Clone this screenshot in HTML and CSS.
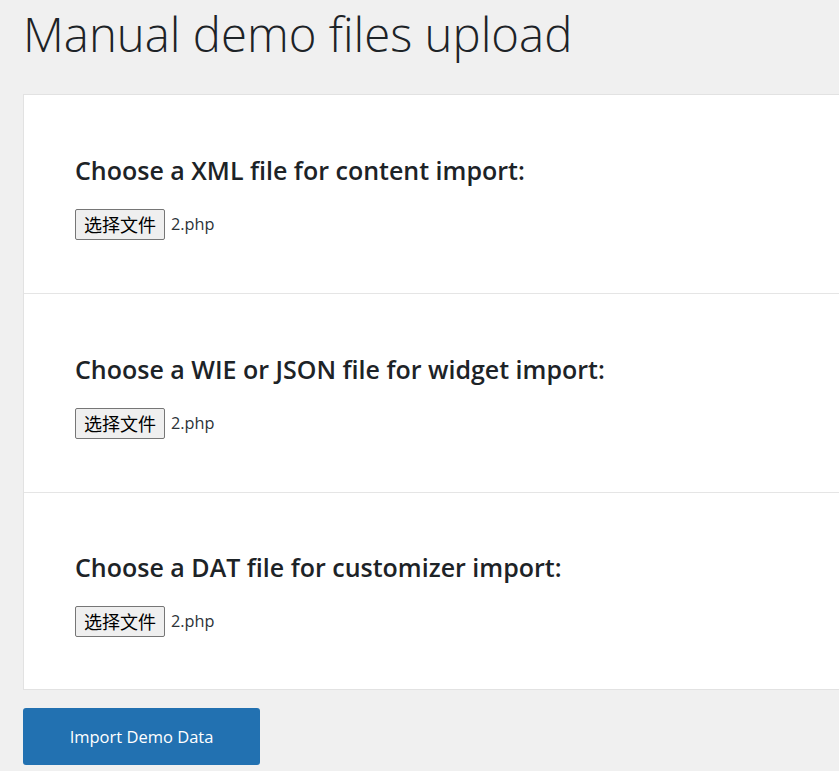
FILE: index.html
```html
<!DOCTYPE html>
<html lang="en">
<head>
<meta charset="utf-8">
<title>Manual demo files upload</title>
<link rel="stylesheet" href="styles.css">
</head>
<body>
<div class="wrap">
  <h1 class="title">Manual demo files upload</h1>
  <div class="card">
    <div class="section">
      <h2 class="heading">Choose a XML file for content import:</h2>
      <div class="file-row"><span class="file-btn">选择文件</span><span class="file-name">2.php</span></div>
    </div>
    <div class="section">
      <h2 class="heading">Choose a WIE or JSON file for widget import:</h2>
      <div class="file-row"><span class="file-btn">选择文件</span><span class="file-name">2.php</span></div>
    </div>
    <div class="section last">
      <h2 class="heading">Choose a DAT file for customizer import:</h2>
      <div class="file-row"><span class="file-btn">选择文件</span><span class="file-name">2.php</span></div>
    </div>
  </div>
  <button class="import-btn">Import Demo Data</button>
</div>
</body>
</html>
```

FILE: styles.css
```css
html, body {
  margin: 0;
  padding: 0;
  background: #f0f0f0;
  overflow: hidden;
}
body {
  font-family: "Open Sans", "Noto Sans CJK SC", sans-serif;
  color: #1d2327;
}
.wrap {
  padding: 0 0 0 23px;
}
.title {
  margin: 0;
  padding-top: 4px;
  height: 90px;
  font-size: 47.3px;
  font-weight: 300;
  line-height: 60px;
  color: #1d2327;
  white-space: nowrap;
}
.card {
  background: #fff;
  border: 1px solid #e2e2e2;
  border-right: none;
}
.section {
  padding: 59px 51px 53px;
  border-bottom: 1px solid #e5e5e5;
}
.section.last {
  border-bottom: none;
  padding-top: 58px;
  padding-bottom: 52px;
}
.heading {
  margin: 0 0 22px;
  font-size: 25px;
  font-weight: 600;
  line-height: 32px;
  color: #1d2327;
  white-space: nowrap;
}
.file-row {
  display: flex;
  align-items: center;
  gap: 6px;
  height: 32px;
}
.file-btn {
  box-sizing: border-box;
  height: 31px;
  width: 90px;
  display: flex;
  align-items: center;
  justify-content: center;
  background: #efefef;
  border: 1px solid #767676;
  border-radius: 2px;
  font-family: "Noto Sans CJK SC", sans-serif;
  font-size: 18px;
  color: #000;
}
.file-name {
  font-size: 16.3px;
  color: #2c3338;
}
.import-btn {
  display: block;
  margin-top: 18px;
  width: 237px;
  height: 57px;
  border: none;
  border-radius: 3px;
  background: #2271b1;
  color: #fff;
  font-family: "Open Sans", sans-serif;
  font-size: 16.5px;
  padding: 0;
}
```
